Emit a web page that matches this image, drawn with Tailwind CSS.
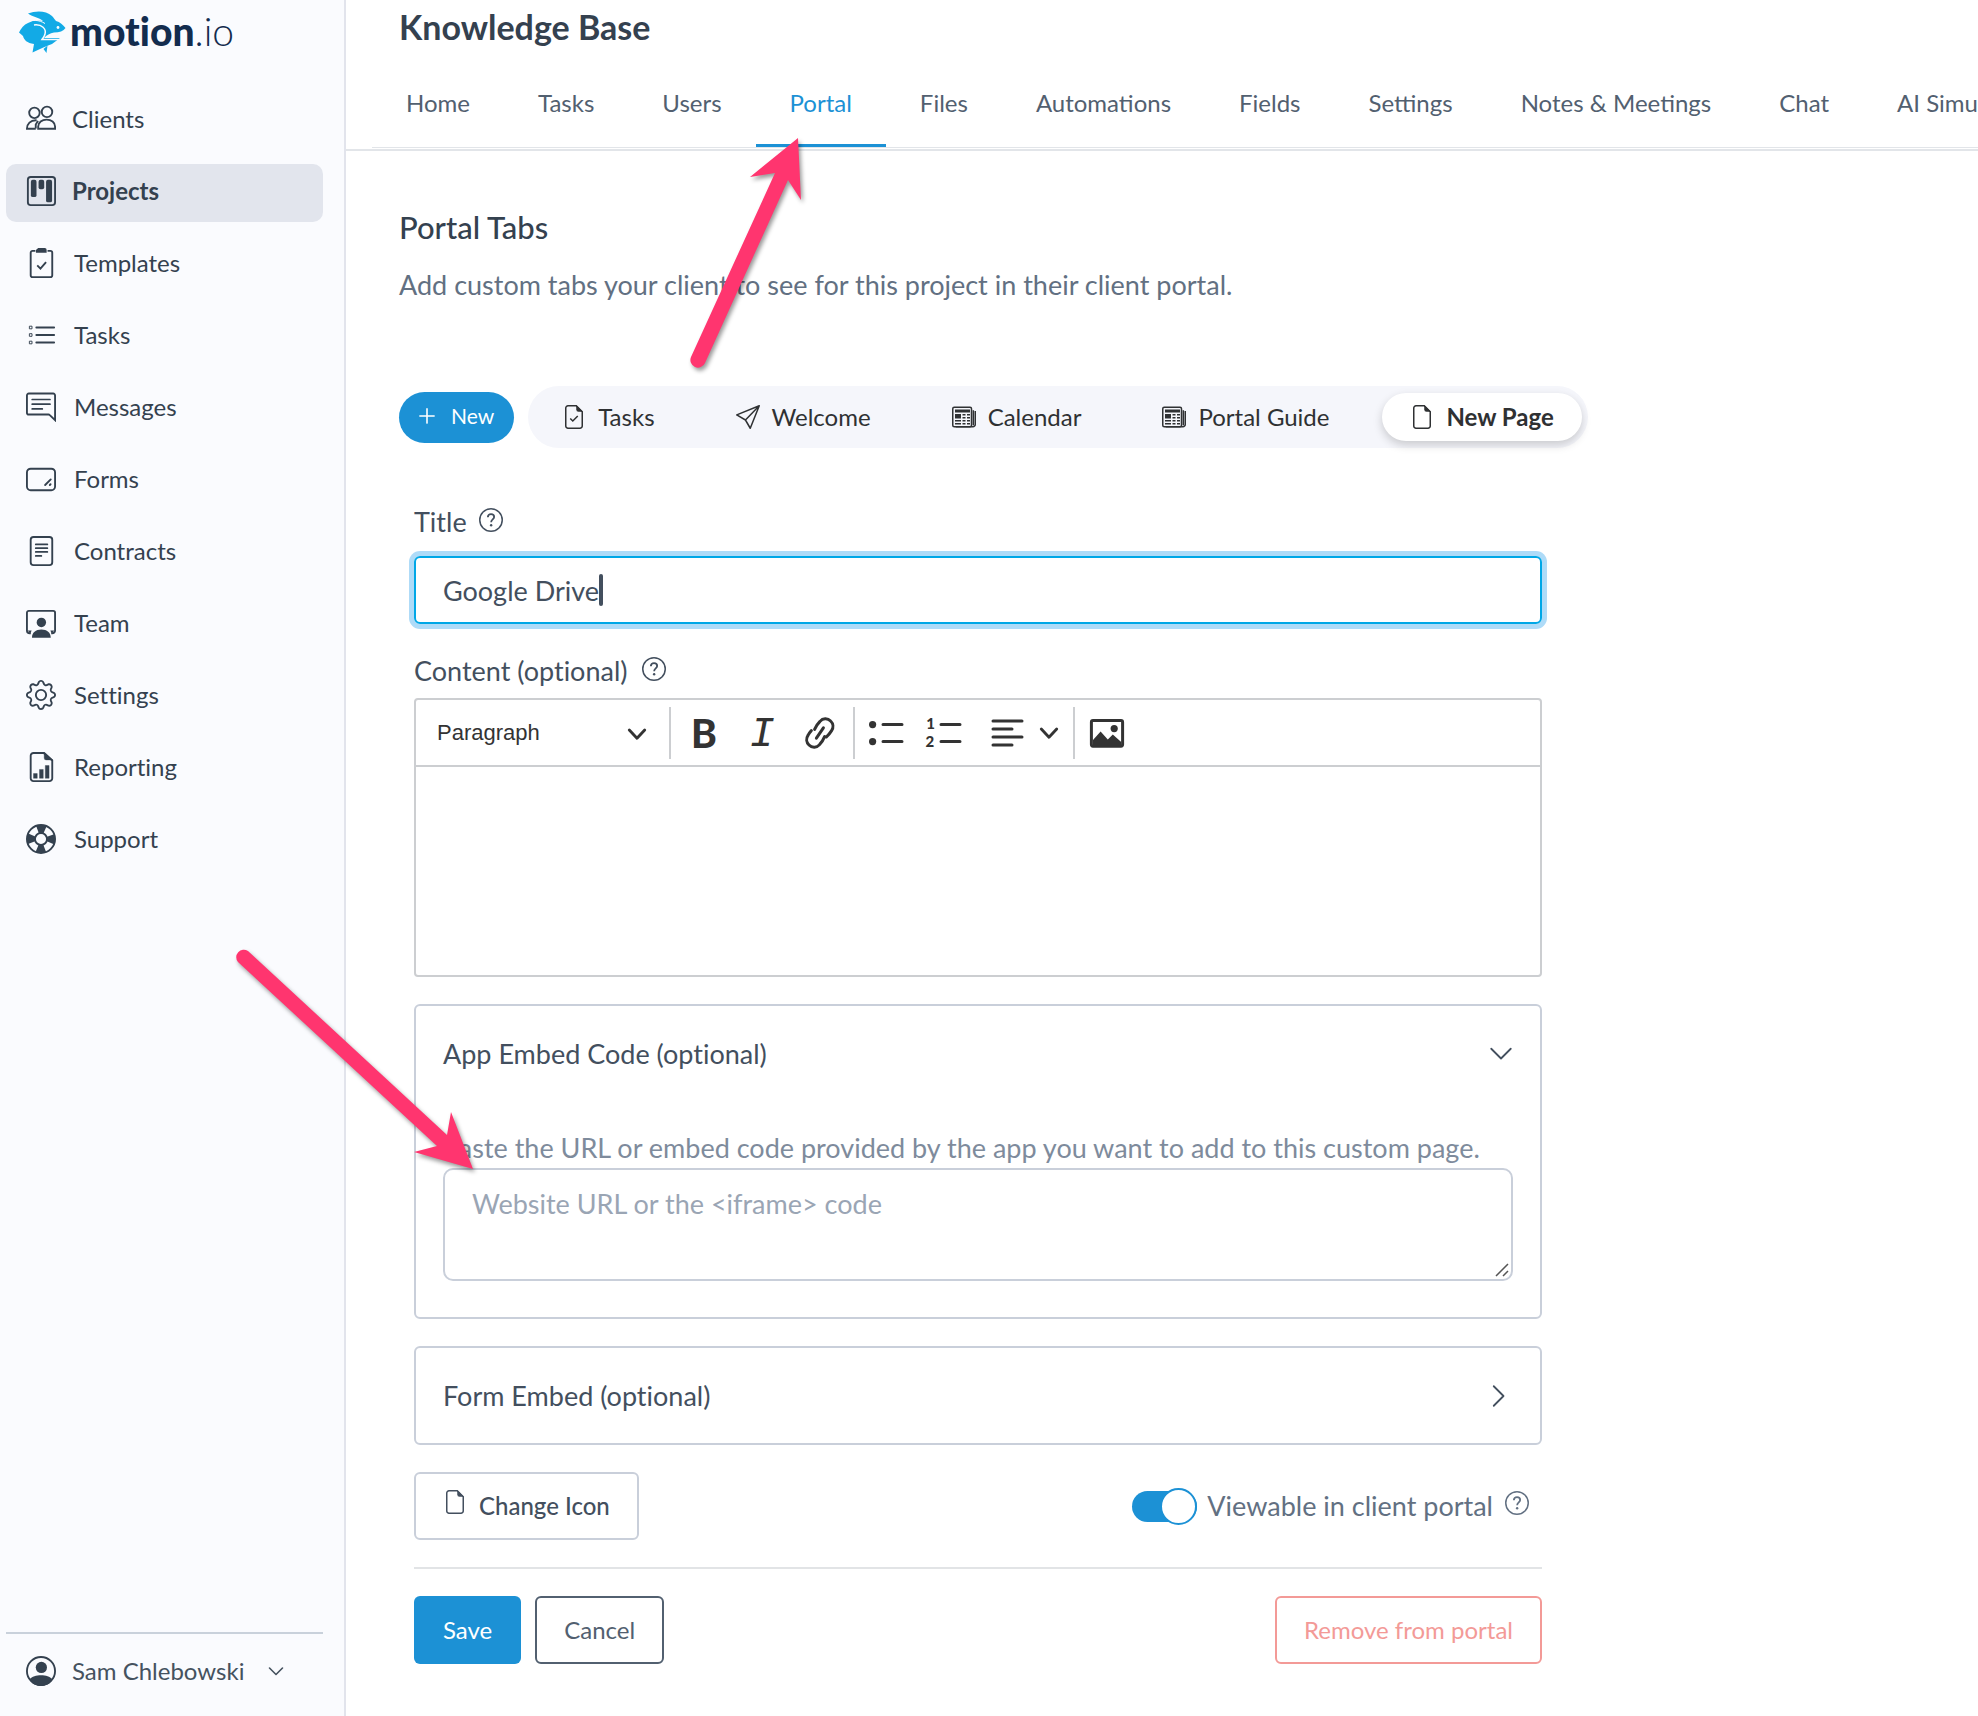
<!DOCTYPE html>
<html lang="en">
<head>
  <meta charset="UTF-8">
  <meta name="viewport" content="width=device-width, initial-scale=1.0">
  <title>Knowledge Base - motion.io</title>
  <script src="https://cdn.jsdelivr.net/npm/@tailwindcss/browser@4"></script>
</head>
<body class="relative bg-white text-[#34414f] font-[Lato,'Open_Sans',sans-serif] [font-variant-ligatures:none] overflow-x-hidden">

  <!-- Shared icons -->
  <svg class="hidden">
    <symbol id="help" viewBox="0 0 16 16">
      <circle cx="8" cy="8" r="7.5" fill="none" stroke="currentColor"/>
      <path d="M5.9 6.1c0-1.3.9-2 2.1-2s2.1.7 2.1 1.9c0 1.6-2 1.7-2 3.5" fill="none" stroke="currentColor" stroke-width="1.2"/>
      <circle cx="8.1" cy="11.5" r=".8" fill="currentColor"/>
    </symbol>
    <symbol id="file" viewBox="0 0 16 16">
      <path d="M9.5.5H4A1.5 1.5 0 0 0 2.5 2v12A1.5 1.5 0 0 0 4 15.5h8a1.5 1.5 0 0 0 1.5-1.5V4.5z" fill="none" stroke="currentColor"/>
      <path d="M9.5 0v3A1.5 1.5 0 0 0 11 4.5h3z" fill="currentColor"/>
    </symbol>
    <symbol id="news" viewBox="0 0 16 16">
      <g fill="none" stroke="currentColor">
        <rect x=".5" y="1.5" width="12.5" height="13" rx="1"/>
        <path d="M2.5 14.5h11.500a1.500 1.500 0 0 0 1.500-1.500V4M14.200 3.500v10"/>
        <path d="M7 6.500h2M10 6.500h2M7 8.500h2M10 8.500h2M2 10.500h4M7 10.500h2M10 10.500h2M2 12.500h4M7 12.500h2M10 12.500h2"/>
      </g>
      <path d="M2 3h10v2H2zM2 6h4v3H2z" fill="currentColor"/>
    </symbol>
    <symbol id="chevron" viewBox="0 0 16 16">
      <path d="M1.500 4.500 8 11l6.500-6.500" fill="none" stroke="currentColor" stroke-width="1.200" stroke-linecap="round" stroke-linejoin="round"/>
    </symbol>
    <symbol id="caret" viewBox="0 0 10 10">
      <path d="M1.500 3.200 5 6.900 8.500 3.200" fill="none" stroke="currentColor" stroke-width="1.300" stroke-linecap="round" stroke-linejoin="round"/>
    </symbol>
  </svg>

  <div class="flex min-h-screen">

    <!-- Sidebar -->
    <aside class="flex flex-col shrink-0 w-[346px] bg-[#fafbfe] border-r-2 border-[#e2e4ec] pl-1.5 pr-[21px]">
      <a href="#" class="flex items-center h-16 pl-[13px] gap-1 text-[#132c4e]">
        <svg class="w-[47px] h-[42px]" viewBox="0 0 47 42">
          <path fill="#12aae6" d="M9 2.500C17-.5 27-.5 33 5c2 2 3 4 4 5 4 1 7 4 9.500 7-2 3-6 4.500-11.500 4.500-4 1-7.500 2.500-10 5.500h16l-8 6c-6 2-12 5-19.500 8.500L15 33C8 32 5 29 4 25L0 21.500c2-4 5-8 9-9.500 5-3 10-3 15-2C20 6.500 14 6 9 2.500z"/>
          <path fill="#12aae6" d="M24.500 38l4-3.500-1 7.500z"/>
          <path d="M15 14c8-1 12.500 4 11 9-.5 2.500-2 4-3 5.500h18" fill="none" stroke="#fafbfe" stroke-width="1.500"/>
          <path d="M8 10.500c5-1.500 12-2 18 2" fill="none" stroke="#fafbfe"/>
          <circle cx="39" cy="16.500" r="1.400" fill="#fafbfe"/>
        </svg>
        <span class="pb-0.5 text-[39px] leading-[46px] font-black">motion<span class="font-light">.io</span></span>
      </a>

      <nav class="mt-7 flex flex-col gap-3.5 text-2xl">
        <a href="#" class="flex items-center gap-4 h-[58px] pl-5 pb-1">
          <svg class="size-[30px]" viewBox="0 0 16 16" fill="none" stroke="currentColor">
            <circle cx="4.500" cy="4.700" r="2.800"/><circle cx="11.200" cy="4.200" r="2.800"/>
            <path d="M6.500 13.200V12c0-2.200 2-3.700 4.500-3.700s4.500 1.500 4.500 3.700v1.200zM5.200 13.200H.5c0-2.600 1.800-4.700 5.200-4.500M5.200 13v-2l1.200-2"/>
          </svg>
          Clients
        </a>
        <a href="#" class="flex items-center gap-4 h-[58px] pl-5 pb-1 rounded-[10px] bg-[#e2e5ed] font-bold">
          <svg class="size-[30px]" viewBox="0 0 16 16">
            <rect x="1" y=".5" width="14.500" height="15" rx="1.500" fill="none" stroke="currentColor"/>
            <g fill="currentColor"><rect x="2.600" y="2" width="3" height="9.200" rx="1"/><rect x="6.700" y="2" width="3" height="5" rx="1"/><rect x="10.700" y="2" width="3.200" height="12" rx="1"/></g>
          </svg>
          Projects
        </a>
        <a href="#" class="flex items-center gap-[18px] h-[58px] pl-5 pb-1">
          <svg class="size-[30px]" viewBox="0 0 16 16" fill="none" stroke="currentColor">
            <path d="M5 1.500H3.500a1 1 0 0 0-1 1v12a1 1 0 0 0 1 1h9.500a1 1 0 0 0 1-1v-12a1 1 0 0 0-1-1h-1.500M6 9.300l1.700 1.700 3-3.500"/>
            <path d="M6.500 0h3.500a1 1 0 0 1 1 1v1.500H5.300V1z" fill="currentColor" stroke="none"/>
          </svg>
          Templates
        </a>
        <a href="#" class="flex items-center gap-[18px] h-[58px] pl-5 pb-1">
          <svg class="size-[30px]" viewBox="0 0 16 16" fill="none" stroke="currentColor">
            <path d="M5.500 4h9.500M5.500 8h9.500M5.500 12h9.500" stroke-linecap="round"/>
            <path d="M1.800 3.300h1.400v1.400H1.800zM1.800 7.300h1.400v1.400H1.800zM1.800 11.300h1.400v1.400H1.800z" stroke-width=".5"/>
          </svg>
          Tasks
        </a>
        <a href="#" class="flex items-center gap-[18px] h-[58px] pl-5 pb-1">
          <svg class="size-[30px]" viewBox="0 0 16 16" fill="none" stroke="currentColor">
            <path d="M1.500.8h13a1 1 0 0 1 1 1V15l-2.800-2.700a1 1 0 0 0-.7-.3H1.500a1 1 0 0 1-1-1V1.800a1 1 0 0 1 1-1z"/>
            <path d="M3.300 4h9.500M3.300 6.500h9.500M3.300 9h5.400" stroke-linecap="round" stroke-width=".9"/>
          </svg>
          Messages
        </a>
        <a href="#" class="flex items-center gap-[18px] h-[58px] pl-5 pb-1">
          <svg class="size-[30px]" viewBox="0 0 16 16" fill="none" stroke="currentColor">
            <rect x=".5" y="2.500" width="15" height="11.500" rx="2"/>
            <path d="M10.200 11.200l3-3M12.700 11.200l.4-.4" stroke-linecap="round"/>
          </svg>
          Forms
        </a>
        <a href="#" class="flex items-center gap-[18px] h-[58px] pl-5 pb-1">
          <svg class="size-[30px]" viewBox="0 0 16 16" fill="none" stroke="currentColor">
            <rect x="2.500" y=".5" width="11.500" height="15" rx="1.500"/>
            <path d="M5.200 4.500h6.200M5.200 6.500h6.200M5.200 8.500h6.200M5.200 10.600h3" stroke-linecap="round" stroke-width=".9"/>
          </svg>
          Contracts
        </a>
        <a href="#" class="flex items-center gap-[18px] h-[58px] pl-5 pb-1">
          <svg class="size-[30px]" viewBox="0 0 16 16">
            <path d="M2.500 13.500H2A1.500 1.500 0 0 1 .5 12V2.500a1 1 0 0 1 1-1h13a1 1 0 0 1 1 1V12a1.500 1.500 0 0 1-1.500 1.500h-.5" fill="none" stroke="currentColor"/>
            <path d="M1 12h2l-.8 2zM15 12h-2l.8 2zM3.200 15.800c0-2.600 2-4.300 5-4.300s5 1.700 5 4.300z" fill="currentColor"/>
            <circle cx="8.200" cy="7.700" r="2.500" fill="currentColor"/>
          </svg>
          Team
        </a>
        <a href="#" class="flex items-center gap-[18px] h-[58px] pl-5 pb-1">
          <svg class="size-[30px]" viewBox="0 0 16 16" fill="currentColor">
            <path d="M8 4.754a3.246 3.246 0 1 0 0 6.492 3.246 3.246 0 0 0 0-6.492zM5.754 8a2.246 2.246 0 1 1 4.492 0 2.246 2.246 0 0 1-4.492 0z"/>
            <path d="M9.796 1.343c-.527-1.790-3.065-1.790-3.592 0l-.094.319a.873.873 0 0 1-1.255.52l-.292-.16c-1.640-.892-3.433.902-2.540 2.541l.159.292a.873.873 0 0 1-.52 1.255l-.319.094c-1.790.527-1.790 3.065 0 3.592l.319.094a.873.873 0 0 1 .52 1.255l-.16.292c-.892 1.640.901 3.434 2.541 2.540l.292-.159a.873.873 0 0 1 1.255.52l.094.319c.527 1.790 3.065 1.790 3.592 0l.094-.319a.873.873 0 0 1 1.255-.52l.292.16c1.640.893 3.434-.902 2.540-2.541l-.159-.292a.873.873 0 0 1 .52-1.255l.319-.094c1.790-.527 1.790-3.065 0-3.592l-.319-.094a.873.873 0 0 1-.52-1.255l.16-.292c.893-1.640-.902-3.433-2.541-2.540l-.292.159a.873.873 0 0 1-1.255-.52l-.094-.319zm-2.633.283c.246-.835 1.428-.835 1.674 0l.094.319a1.873 1.873 0 0 0 2.693 1.115l.291-.16c.764-.415 1.600.42 1.184 1.185l-.159.292a1.873 1.873 0 0 0 1.116 2.692l.318.094c.835.246.835 1.428 0 1.674l-.319.094a1.873 1.873 0 0 0-1.115 2.693l.16.291c.415.764-.42 1.600-1.185 1.184l-.291-.159a1.873 1.873 0 0 0-2.693 1.116l-.094.318c-.246.835-1.428.835-1.674 0l-.094-.319a1.873 1.873 0 0 0-2.692-1.115l-.292.16c-.764.415-1.600-.42-1.184-1.185l.159-.291A1.873 1.873 0 0 0 1.945 8.930l-.319-.094c-.835-.246-.835-1.428 0-1.674l.319-.094A1.873 1.873 0 0 0 3.060 4.377l-.16-.292c-.415-.764.42-1.600 1.185-1.184l.292.159a1.873 1.873 0 0 0 2.692-1.115l.094-.319z"/>
          </svg>
          Settings
        </a>
        <a href="#" class="flex items-center gap-[18px] h-[58px] pl-5 pb-1">
          <svg class="size-[30px]" viewBox="0 0 16 16">
            <path d="M9.500.5H4A1.500 1.500 0 0 0 2.500 2v12A1.500 1.500 0 0 0 4 15.500h8.500A1.500 1.500 0 0 0 14 14V4.500z" fill="none" stroke="currentColor"/>
            <path d="M9.700 0v3.200a1 1 0 0 0 1 1H14.300zM4 11.500h2V14H4zM7.200 9.300h2V14h-2zM10.300 7.200h2V14h-2z" fill="currentColor" stroke="currentColor" stroke-width=".2"/>
          </svg>
          Reporting
        </a>
        <a href="#" class="flex items-center gap-[18px] h-[58px] pl-5 pb-1">
          <svg class="size-[30px]" viewBox="0 0 16 16" fill="none" stroke="currentColor">
            <circle cx="8" cy="8" r="7.500"/>
            <circle cx="8" cy="8" r="5.200" stroke-width="4.400" stroke-dasharray="4 4.168" stroke-dashoffset="2"/>
            <circle cx="8" cy="8" r="3.200"/>
          </svg>
          Support
        </a>
      </nav>

      <button class="mt-auto flex items-center h-[84px] border-t-2 border-[#c9d1db] pl-5 pb-2 text-2xl text-[#45525f]">
        <svg class="size-[30px] text-[#34414f]" viewBox="0 0 16 16">
          <circle cx="8" cy="8" r="7.500" fill="none" stroke="currentColor"/>
          <circle cx="8.200" cy="6.100" r="3" fill="currentColor"/>
          <path d="M1.800 12.500c1.500-1.800 3.600-2.300 6.200-2.300s4.700.5 6.200 2.300C13 14.800 10.500 16 8 16s-5-1.200-6.200-3.500z" fill="currentColor"/>
        </svg>
        <span class="ml-4">Sam Chlebowski</span>
        <svg class="ml-6 size-4" viewBox="0 0 16 16"><path d="M1.500 5 8 11.500 14.500 5" fill="none" stroke="currentColor" stroke-width="1.600" stroke-linecap="round" stroke-linejoin="round"/></svg>
      </button>
    </aside>

    <main class="flex-1 min-w-0">
      <header class="border-b-2 border-[#e2e5e9] pt-2 pb-px">
        <h1 class="pl-[53px] pb-0.5 text-[34px] leading-[38px] font-bold">Knowledge Base</h1>
        <nav class="mt-3 ml-[26px] flex h-[88px] overflow-hidden border-b border-[#e2e5e9] text-2xl whitespace-nowrap text-[#526070] [font-variant-ligatures:normal]">
          <a href="#" class="flex items-center px-[34px] pb-0.5">Home</a>
          <a href="#" class="flex items-center px-[34px] pb-0.5">Tasks</a>
          <a href="#" class="flex items-center px-[34px] pb-0.5">Users</a>
          <a href="#" class="flex items-center px-[34px] pb-0.5 text-[#1c91d5] shadow-[inset_0_-3px_0_#1c91d5]">Portal</a>
          <a href="#" class="flex items-center px-[34px] pb-0.5">Files</a>
          <a href="#" class="flex items-center px-[34px] pb-0.5">Automations</a>
          <a href="#" class="flex items-center px-[34px] pb-0.5">Fields</a>
          <a href="#" class="flex items-center px-[34px] pb-0.5">Settings</a>
          <a href="#" class="flex items-center px-[34px] pb-0.5">Notes &amp; Meetings</a>
          <a href="#" class="flex items-center px-[34px] pb-0.5">Chat</a>
          <a href="#" class="flex items-center px-[34px] pb-0.5">AI Simulator</a>
        </nav>
      </header>

      <section class="pl-[53px] pt-14">
        <h2 class="text-[31px] leading-10 font-medium">Portal Tabs</h2>
        <p class="mt-[18px] text-[27px] leading-10 text-[#627082]">Add custom tabs your client to see for this project in their client portal.</p>

        <div class="mt-[81px] flex items-center gap-3.5">
          <button class="flex items-center gap-4 h-[51px] rounded-full bg-[#1c91d5] px-5 pb-0.5 text-[21px] text-white">
            <svg class="size-4" viewBox="0 0 18 18"><path d="M9 1v16M1 9h16" stroke="currentColor" stroke-width="1.800" stroke-linecap="round"/></svg>
            New
          </button>
          <div class="flex items-center gap-[25px] h-[62px] rounded-full bg-[#f5f6fb] px-1.5 text-2xl text-[#2f3133]">
            <button class="flex items-center gap-3 h-12 px-7">
              <svg class="size-6" viewBox="0 0 16 16"><use href="#file"/><path d="M5.500 9l1.700 1.700 3.300-3.400" fill="none" stroke="currentColor"/></svg>
              Tasks
            </button>
            <button class="flex items-center gap-3 h-12 px-7">
              <svg class="size-6" viewBox="0 0 16 16" fill="none" stroke="currentColor" stroke-linejoin="round"><path d="M15.500.5 9.500 15.500 6.300 10 .5 6.600zM15.500.5 6.300 10"/></svg>
              Welcome
            </button>
            <button class="flex items-center gap-3 h-12 px-7">
              <svg class="size-6"><use href="#news"/></svg>
              Calendar
            </button>
            <button class="flex items-center gap-3 h-12 px-7">
              <svg class="size-6"><use href="#news"/></svg>
              Portal Guide
            </button>
            <button class="flex items-center gap-3 h-12 px-7 rounded-full bg-white font-bold shadow-[0_4px_10px_rgba(0,0,0,0.18)]">
              <svg class="size-6"><use href="#file"/></svg>
              New Page
            </button>
          </div>
        </div>

        <form class="mt-[54px] ml-[15px] flex flex-col gap-[27px] max-w-[1128px] text-[27px] leading-10 text-[#434f5e]">
          <div>
            <div class="flex items-center gap-3">
              <label for="title">Title</label>
              <svg class="mb-1 size-6"><use href="#help"/></svg>
            </div>
            <div class="relative mt-3.5">
              <input type="text" id="title" value="Google Drive" class="block w-full h-[68px] px-[27px] rounded-md border-2 border-[#00a7e6] ring-5 ring-[#aedbf8]" />
              <span class="absolute left-[185px] top-[18px] w-1 h-8 rounded bg-[#434f5e]"></span>
            </div>
          </div>

          <div>
            <div class="flex items-center gap-3.5">
              <label for="content">Content (optional)</label>
              <svg class="mb-1 size-6"><use href="#help"/></svg>
            </div>
            <div class="mt-[7px] rounded-sm border-2 border-[#ccced1] text-[#333333]">
              <div class="flex items-center h-[67px] border-b-2 border-[#ccced1]">
                <div class="relative w-[253px]">
                  <select aria-label="Heading" class="block appearance-none w-full h-12 pl-[21px] font-['Liberation_Sans',sans-serif] text-[22px]">
                    <option>Paragraph</option>
                  </select>
                  <svg class="absolute right-[21px] top-3.5 size-[22px] pointer-events-none"><use href="#caret"/></svg>
                </div>
                <div class="flex items-center h-[52px] border-l-2 border-r-2 border-[#ccced1] px-1">
                  <button type="button" class="w-[58px] h-12 text-[39px] font-black">B</button>
                  <button type="button" class="w-[58px] h-12 pt-1 text-[42px] italic font-['Liberation_Mono',monospace]">I</button>
                  <button type="button" aria-label="Link" class="flex justify-center items-center w-[58px] h-12">
                    <svg class="size-10" viewBox="0 0 20 20" fill="none" stroke="currentColor" stroke-width="1.500" stroke-linecap="round">
                      <path d="M7.300 8.200C8 6.500 9 5.200 10 4.200a3.600 3.600 0 0 1 5.300-.2 3.700 3.700 0 0 1 .5 4.800c-.8 1.300-1.700 2.300-2.600 3.200M12.300 11.800c-.7 1.700-1.600 3-2.500 4a3.600 3.600 0 0 1-5.300.2 3.700 3.700 0 0 1-.5-4.800c.5-1 1.100-1.700 1.700-2.400M8.200 12.600l3.500-5.200"/>
                    </svg>
                  </button>
                </div>
                <div class="flex items-center h-[52px] border-r-2 border-[#ccced1] px-[3px]">
                  <button type="button" aria-label="Bulleted list" class="flex justify-center items-center w-[58px] h-12">
                    <svg class="size-10" viewBox="0 0 20 20">
                      <path d="M8 5.800h9.500M8 14.300h9.500" stroke="currentColor" stroke-width="1.500" stroke-linecap="round"/>
                      <circle cx="2.800" cy="5.800" r="1.800" fill="currentColor"/><circle cx="2.800" cy="14.300" r="1.800" fill="currentColor"/>
                    </svg>
                  </button>
                  <button type="button" aria-label="Numbered list" class="flex justify-center items-center w-[58px] h-12">
                    <svg class="size-10" viewBox="0 0 20 20">
                      <path d="M8 5.800h9.500M8 14.300h9.500" stroke="currentColor" stroke-width="1.500" stroke-linecap="round"/>
                      <text x=".6" y="8" font-size="7.500" font-weight="900" fill="currentColor">1</text>
                      <text x=".3" y="17" font-size="7.500" font-weight="900" fill="currentColor">2</text>
                    </svg>
                  </button>
                  <button type="button" aria-label="Text alignment" class="flex items-center pl-3.5 gap-2.5 w-24 h-12">
                    <svg class="size-10" viewBox="0 0 20 20">
                      <path d="M2.500 4h14.500M2.500 8h9.500M2.500 12h14.500M2.500 16h9.500" stroke="currentColor" stroke-width="1.500" stroke-linecap="round"/>
                    </svg>
                    <svg class="size-[22px]"><use href="#caret"/></svg>
                  </button>
                </div>
                <button type="button" aria-label="Insert image" class="flex justify-center items-center ml-[3px] w-[58px] h-12">
                  <svg class="size-10" viewBox="0 0 20 20">
                    <rect x="2.200" y="3.800" width="15.600" height="12.800" rx=".8" fill="none" stroke="currentColor" stroke-width="1.500"/>
                    <path d="M3 16v-2.500l3.800-4.200 3.600 3.900 2.500-2.500 4.200 3.800V16z" fill="currentColor"/>
                    <circle cx="13.600" cy="7.800" r="1.800" fill="currentColor"/>
                  </svg>
                </button>
              </div>
              <textarea id="content" class="block w-full h-52 px-6 py-3 resize-none"></textarea>
            </div>
          </div>

          <div class="rounded-md border-2 border-[#c9cfda] px-[27px] pt-7 pb-9">
            <button type="button" class="flex w-full items-center justify-between">
              App Embed Code (optional)
              <svg class="size-6"><use href="#chevron"/></svg>
            </button>
            <label for="embed" class="mt-[54px] block text-[#7e8b9c]">Paste the URL or embed code provided by the app you want to add to this custom page.</label>
            <div class="relative">
              <textarea id="embed" placeholder="Website URL or the &lt;iframe&gt; code" class="block w-full h-[113px] rounded-[10px] border-2 border-[#c9cfda] px-[27px] py-3.5 resize-none placeholder:text-[#9aa5b4]"></textarea>
              <svg class="absolute right-1 bottom-1 size-[14px]" viewBox="0 0 14 14"><path d="M1 13 13 1M8 13l5-5" stroke="#555" stroke-width="1.500"/></svg>
            </div>
          </div>

          <div class="rounded-md border-2 border-[#c9cfda] px-[27px] pt-7 pb-[27px]">
            <button type="button" class="flex w-full items-center justify-between pr-0.5">
              Form Embed (optional)
              <svg class="size-6 -rotate-90"><use href="#chevron"/></svg>
            </button>
          </div>

          <div class="flex items-center justify-between">
            <button type="button" class="flex items-center gap-3 h-[68px] rounded-md border-2 border-[#c9cfda] px-[27px] text-2xl font-medium">
              <svg class="mb-2 size-6"><use href="#file"/></svg>
              Change Icon
            </button>
            <div class="flex items-center pr-[13px] text-[#627082]">
              <input type="checkbox" id="viewable" checked class="relative appearance-none w-[65px] h-[31px] rounded-full bg-[#1c91d5] before:absolute before:right-0 before:-top-[3px] before:size-[37px] before:rounded-full before:border-2 before:border-[#1c91d5] before:bg-white" />
              <label for="viewable" class="ml-2.5">Viewable in client portal</label>
              <svg class="ml-3 mb-1.5 size-6"><use href="#help"/></svg>
            </div>
          </div>

          <hr class="border-t-2 border-[#e2e4e6]">

          <div class="flex items-center gap-3.5 text-2xl">
            <button type="submit" class="h-[68px] rounded-md bg-[#1c91d5] px-[29px] text-white">Save</button>
            <button type="button" class="h-[68px] rounded-md border-2 border-[#526070] px-[27px] text-[#526070]">Cancel</button>
            <button type="button" class="ml-auto h-[68px] rounded-md border-2 border-[#f39a97] px-[27px] text-[#f39a97]">Remove from portal</button>
          </div>
        </form>
      </section>
    </main>
  </div>

  <!-- Pointer arrows -->
  <svg class="absolute left-[680px] top-[130px] w-[140px] h-[250px] pointer-events-none drop-shadow-[2px_3px_2px_rgba(0,0,0,0.4)]" viewBox="680 130 140 250">
    <path fill="#ff356f" d="M798 138 750 177 775 173 691 357A7.500 7.500 0 0 0 705 363L788 180 801 200Z"/>
  </svg>
  <svg class="absolute left-[225px] top-[940px] w-[260px] h-[240px] pointer-events-none drop-shadow-[2px_3px_2px_rgba(0,0,0,0.4)]" viewBox="225 940 260 240">
    <path fill="#ff356f" d="M473 1169 451 1112 447 1135 248 951A7.500 7.500 0 0 0 238 962L437 1146 414 1152Z"/>
  </svg>
</body>
</html>
